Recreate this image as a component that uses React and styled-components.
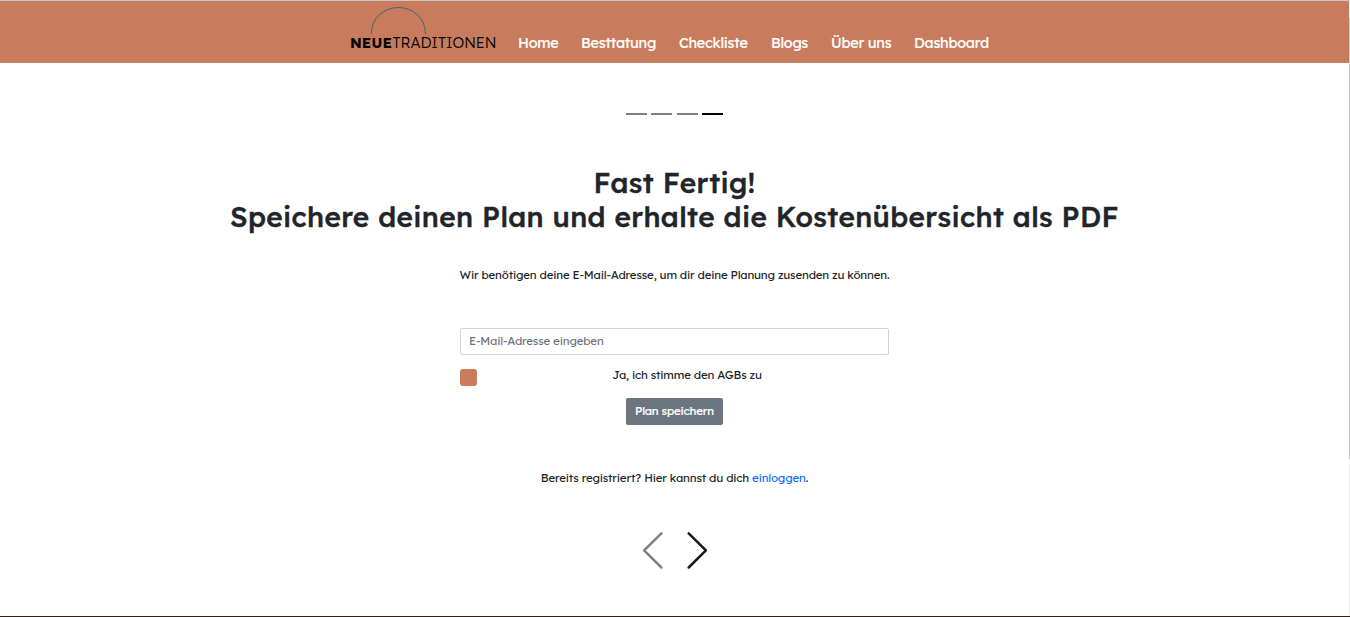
import React from "react";
import styled, { createGlobalStyle } from "styled-components";

const Global = createGlobalStyle`
  * { box-sizing: border-box; }
  body { margin: 0; background: #fff; }
  h1, p { margin: 0; }
`;

const Page = styled.div`
  position: relative;
  display: flex;
  flex-direction: column;
  height: 617px;
  overflow: hidden;
  border-top: 1px solid #c9c9c7;
  border-bottom: 1px solid #32201d;
  background: #fff;
  color: #212529;
  font-family: Lexend, Inter, sans-serif;
  font-size: 11.52px;
  font-weight: 400;
  line-height: 18px;
  letter-spacing: -0.175px;
`;

const ScrollTrack = styled.div`
  position: absolute;
  top: 0;
  right: 0;
  width: 1px;
  height: 615px;
  background: linear-gradient(#efefef 17px, #c6c6c6 17px 458px, #efefef 458px);
`;

const BottomTab = styled.div`
  position: absolute;
  left: 540px;
  bottom: -1px;
  width: 48px;
  height: 1px;
  background: #70605d;
`;

const Navbar = styled.header`
  display: flex;
  flex: none;
  height: 62px;
  margin-right: 1px;
  padding-left: 350px;
  background: #c97b5d;
`;

const Logo = styled.svg`
  display: block;
  width: 148px;
  height: 62px;
  margin-right: 20px;
  flex: none;
  letter-spacing: 0;
`;

const Menu = styled.nav`
  display: flex;
  gap: 23px;
  padding-top: 31px;
`;

const MenuLink = styled.a`
  width: ${(p) => p.$width}px;
  color: #fff;
  font-size: 14.4px;
  font-weight: 400;
  line-height: 22px;
  letter-spacing: -0.23px;
  -webkit-text-stroke: 0.2px #fff;
  white-space: nowrap;
`;

const Main = styled.main`
  display: flex;
  flex-direction: column;
  align-items: center;
  padding: 50px 1px 0 0;
`;

const Steps = styled.div`
  display: flex;
  gap: 4.33px;
  height: 2px;
`;

const Step = styled.span`
  width: 21px;
  background: ${(p) => (p.$active ? "#000" : "#808080")};
`;

const Title = styled.h1`
  margin-top: 51px;
  font-size: 28px;
  font-weight: 500;
  line-height: 34px;
  letter-spacing: 0.37px;
  -webkit-text-stroke: 0.4px #212529;
  text-align: center;
`;

const TitleLine = styled.span`
  display: block;
  white-space: nowrap;
`;

const Intro = styled.p`
  margin-top: 32px;
  white-space: nowrap;
`;

const Form = styled.form`
  display: flex;
  flex-direction: column;
  align-items: center;
  width: 429px;
  margin-top: 44px;
`;

const EmailInput = styled.input`
  width: 100%;
  height: 27px;
  padding: 0 8px 2px;
  border: 1px solid #ced4da;
  border-radius: 2px;
  font: inherit;
  line-height: 18px;
  letter-spacing: inherit;
  &::placeholder { color: #6c757d; opacity: 1; }
`;

const ConsentRow = styled.div`
  display: flex;
  align-items: flex-start;
  width: 100%;
  height: 32px;
  margin-top: 11px;
`;

const Checkbox = styled.span`
  flex: none;
  width: 17px;
  height: 17px;
  margin-top: 3px;
  border-radius: 3px;
  background: #c97b5d;
`;

const Consent = styled.span`
  flex: 1;
  padding-left: 8px;
  text-align: center;
`;

const SaveButton = styled.button`
  width: 97px;
  height: 27px;
  padding: 0 0 1px;
  border: 0;
  border-radius: 2px;
  background: #6c757d;
  color: #fff;
  font: inherit;
  letter-spacing: inherit;
  -webkit-text-stroke: 0.2px #fff;
  white-space: nowrap;
`;

const Login = styled.p`
  margin-top: 44px;
  white-space: nowrap;
  a { color: #0d6efd; text-decoration: none; }
`;

const Arrows = styled.svg`
  display: block;
  width: 70px;
  height: 42px;
  margin-top: 42px;
  fill: none;
  stroke-width: 2.5;
  stroke-linecap: round;
  stroke-linejoin: round;
`;

const links = [
  ["Home", 40], ["Besttatung", 75], ["Checkliste", 69],
  ["Blogs", 37], ["Über uns", 60], ["Dashboard", 75],
];

export default function App() {
  return (
    <Page>
      <Global />
      <Navbar>
        <Logo viewBox="0 0 148 62">
          <path d="M21.5 33V31.5A26.9 25 0 0 1 75.3 31.5V33" fill="none" stroke="#396c67" />
          <text x="0" y="47" fontFamily="Lexend, sans-serif" fontSize="14" fontWeight="700" textLength="42" lengthAdjust="spacingAndGlyphs">NEUE</text>
          <text x="42.5" y="47" fontFamily="Lexend, sans-serif" fontSize="14" fontWeight="300" textLength="104" lengthAdjust="spacingAndGlyphs">TRADITIONEN</text>
        </Logo>
        <Menu>
          {links.map(([label, width]) => (
            <MenuLink key={label} $width={width}>{label}</MenuLink>
          ))}
        </Menu>
      </Navbar>
      <Main>
        <Steps><Step /><Step /><Step /><Step $active /></Steps>
        <Title>
          <TitleLine>Fast Fertig!</TitleLine>
          <TitleLine>Speichere deinen Plan und erhalte die Kostenübersicht als PDF</TitleLine>
        </Title>
        <Intro>Wir benötigen deine E-Mail-Adresse, um dir deine Planung zusenden zu können.</Intro>
        <Form>
          <EmailInput type="email" placeholder="E-Mail-Adresse eingeben" />
          <ConsentRow><Checkbox /><Consent>Ja, ich stimme den AGBs zu</Consent></ConsentRow>
          <SaveButton type="button">Plan speichern</SaveButton>
        </Form>
        <Login>Bereits registriert? Hier kannst du dich <a>einloggen</a>.</Login>
        <Arrows viewBox="0 0 70 42">
          <path d="M21.4 4.3L4.1 21.4 21.4 38.5" stroke="#808080" />
          <path d="M48.7 4.3l17.2 17.1L48.7 38.5" stroke="#18191b" />
        </Arrows>
      </Main>
      <ScrollTrack />
      <BottomTab />
    </Page>
  );
}
